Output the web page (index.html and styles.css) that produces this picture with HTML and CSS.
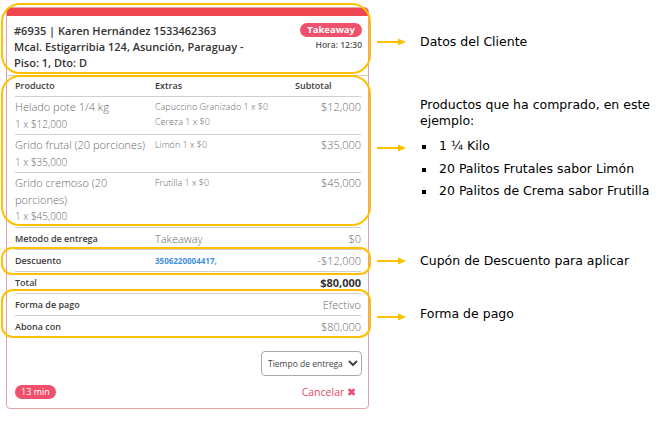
FILE: index.html
```html
<!DOCTYPE html>
<html lang="es">
<head>
    <meta charset="UTF-8">
    <meta name="viewport" content="width=device-width, initial-scale=1.0">
    <title>Pedido #6935</title>
    <link rel="stylesheet" href="styles.css">
</head>
<body>
    <div class="page">
        <div class="order-card">
            <div class="card-top"></div>
            <div class="order-head">
                <div class="client">
                    #6935 | Karen Hernández 1533462363<br>
                    Mcal. Estigarribia 124, Asunción, Paraguay - Piso: 1, Dto: D
                </div>
                <div class="head-side">
                    <span class="badge">Takeaway</span>
                    <span class="hora">Hora: 12:30</span>
                </div>
            </div>

            <div class="items">
                <div class="item items-head">
                    <span>Producto</span>
                    <span>Extras</span>
                    <span>Subtotal</span>
                </div>
                <div class="item">
                    <div class="prod">Helado pote 1/4 kg<small>1 x $12,000</small></div>
                    <div class="extras">Capuccino Granizado 1 x $0<br>Cereza 1 x $0</div>
                    <div class="price">$12,000</div>
                </div>
                <div class="item">
                    <div class="prod">Grido frutal (20 porciones)<small>1 x $35,000</small></div>
                    <div class="extras">Limón 1 x $0</div>
                    <div class="price">$35,000</div>
                </div>
                <div class="item">
                    <div class="prod">Grido cremoso (20 porciones)<small>1 x $45,000</small></div>
                    <div class="extras">Frutilla 1 x $0</div>
                    <div class="price">$45,000</div>
                </div>
            </div>

            <div class="summary">
                <div class="sum-row">
                    <span class="label">Metodo de entrega</span>
                    <span class="mid">Takeaway</span>
                    <span class="value">$0</span>
                </div>
                <div class="sum-row">
                    <span class="label">Descuento</span>
                    <span class="mid coupon">3506220004417,</span>
                    <span class="value">-$12,000</span>
                </div>
                <div class="sum-row total">
                    <span class="label">Total</span>
                    <span class="mid"></span>
                    <span class="value">$80,000</span>
                </div>
                <div class="sum-row">
                    <span class="label">Forma de pago</span>
                    <span class="mid"></span>
                    <span class="value">Efectivo</span>
                </div>
                <div class="sum-row last">
                    <span class="label">Abona con</span>
                    <span class="mid"></span>
                    <span class="value">$80,000</span>
                </div>
            </div>

            <div class="delivery">
                <select class="time-select">
                    <option>Tiempo de entrega</option>
                    <option>15 min</option>
                    <option>30 min</option>
                </select>
            </div>

            <div class="card-foot">
                <span class="timer">13 min</span>
                <a href="#" class="cancel">Cancelar &#10006;</a>
            </div>
        </div>

        <!-- anotaciones -->
        <svg class="marks" width="660" height="422" viewBox="0 0 660 422">
            <g fill="none" stroke="#ffc000" stroke-width="2">
                <rect x="2" y="4" width="368" height="69" rx="18"/>
                <rect x="2" y="76" width="368" height="149" rx="18"/>
                <rect x="2" y="248" width="368" height="26" rx="10"/>
                <rect x="2" y="290" width="368" height="47" rx="11"/>
                <line x1="377" y1="42" x2="400" y2="42"/>
                <line x1="377" y1="148" x2="400" y2="148"/>
                <line x1="377" y1="261" x2="400" y2="261"/>
                <line x1="377" y1="317" x2="400" y2="317"/>
            </g>
            <g fill="#ffc000">
                <polygon points="398,38.5 406,42 398,45.5"/>
                <polygon points="398,144.5 406,148 398,151.5"/>
                <polygon points="398,257.5 406,261 398,264.5"/>
                <polygon points="398,313.5 406,317 398,320.5"/>
            </g>
        </svg>

        <div class="note note-client">Datos del Cliente</div>
        <div class="note note-products">
            Productos que ha comprado, en este ejemplo:
            <ul>
                <li>1 ¼ Kilo</li>
                <li>20 Palitos Frutales sabor Limón</li>
                <li>20 Palitos de Crema sabor Frutilla</li>
            </ul>
        </div>
        <div class="note note-coupon">Cupón de Descuento para aplicar</div>
        <div class="note note-pay">Forma de pago</div>
    </div>
</body>
</html>
```

FILE: styles.css
```css
body {
    margin: 0;
    padding: 0;
    background-color: white;
    font-family: "Open Sans", Arial, sans-serif;
    color: #444;
}
.page {
    position: relative;
    width: 660px;
    height: 422px;
    overflow: hidden;
}

/* tarjeta del pedido */
.order-card {
    box-sizing: border-box;
    width: 363px;
    height: 402px;
    margin: 7px 0 0 6px;
    border: 1px solid #e4a2a6;
    border-radius: 4px;
    overflow: hidden;
    display: flex;
    flex-direction: column;
}
.card-top {
    height: 8px;
    background-color: #ef4651;
    flex-shrink: 0;
}
.order-head {
    display: flex;
    justify-content: space-between;
    padding: 7px 6px 0 7px;
    height: 52px;
    border-bottom: 1px solid #cfcfcf;
    flex-shrink: 0;
}
.client {
    width: 240px;
    font-size: 11px;
    font-weight: 600;
    line-height: 16px;
    color: #333;
}
.head-side {
    display: flex;
    flex-direction: column;
    align-items: flex-end;
    gap: 2px;
}
.badge {
    background-color: #f0506b;
    color: white;
    font-size: 9.5px;
    font-weight: 700;
    line-height: 14px;
    padding: 0 7px;
    border-radius: 8px;
}
.hora {
    font-size: 8.5px;
    font-weight: 600;
    color: #555;
}

/* productos */
.items {
    padding: 0 7px 0 8px;
}
.item {
    display: grid;
    grid-template-columns: 140px 140px 1fr;
    border-bottom: 1px solid #cfcfcf;
    padding: 2px 0;
}
.items-head {
    font-size: 9px;
    font-weight: 600;
    color: #3c3c3c;
    line-height: 16px;
}
.prod {
    font-size: 11px;
    font-weight: 300;
    line-height: 16.5px;
    color: #6a6a6a;
    padding-right: 4px;
}
.prod small {
    display: block;
    font-size: 10px;
}
.extras {
    font-size: 9px;
    font-weight: 300;
    line-height: 15px;
    color: #6a6a6a;
}
.price {
    text-align: right;
    font-size: 11px;
    font-weight: 300;
    line-height: 16.5px;
    color: #6a6a6a;
}

/* resumen */
.summary {
    padding: 0 7px 0 8px;
}
.sum-row {
    display: grid;
    grid-template-columns: 140px 1fr auto;
    align-items: center;
    height: 21px;
    border-bottom: 1px solid #cfcfcf;
}
.sum-row.last { border-bottom: none; }
.label {
    font-size: 9px;
    font-weight: 600;
    color: #3c3c3c;
}
.mid {
    font-size: 11px;
    font-weight: 300;
    color: #6a6a6a;
}
.coupon {
    font-size: 8px;
    font-weight: 700;
    color: #3d8fe0;
}
.value {
    font-size: 11px;
    font-weight: 300;
    color: #6a6a6a;
}
.total .value {
    font-weight: 700;
    color: #333;
}

/* pie */
.delivery {
    display: flex;
    justify-content: flex-end;
    padding: 14px 6px 0;
}
.time-select {
    width: 101px;
    height: 25px;
    font-family: "Open Sans", Arial, sans-serif;
    font-size: 8.5px;
    color: #444;
    background-color: white;
    border: 1px solid #aaa;
    border-radius: 4px;
    padding: 0 2px;
}
.card-foot {
    display: flex;
    justify-content: space-between;
    align-items: center;
    padding: 9px 12px 0 8px;
}
.timer {
    background-color: #f0506b;
    color: white;
    font-size: 9px;
    line-height: 14px;
    padding: 0 6px;
    border-radius: 8px;
}
.cancel {
    color: #e94a69;
    font-size: 10.5px;
    text-decoration: none;
}

/* anotaciones */
.marks {
    position: absolute;
    top: 0;
    left: 0;
}
.note {
    position: absolute;
    left: 420px;
    font-family: "DejaVu Sans", Verdana, sans-serif;
    font-size: 12.5px;
    color: black;
    line-height: 16px;
}
.note-client { top: 34px; }
.note-products {
    top: 97px;
    width: 230px;
}
.note-products ul {
    margin: 6px 0 0;
    padding: 0 0 0 19px;
    list-style: none;
}
.note-products li {
    position: relative;
    line-height: 22.5px;
}
.note-products li::before {
    content: "";
    position: absolute;
    left: -17px;
    top: 10px;
    width: 4px;
    height: 4px;
    background: black;
}
.note-coupon { top: 253px; }
.note-pay { top: 306px; }
```
